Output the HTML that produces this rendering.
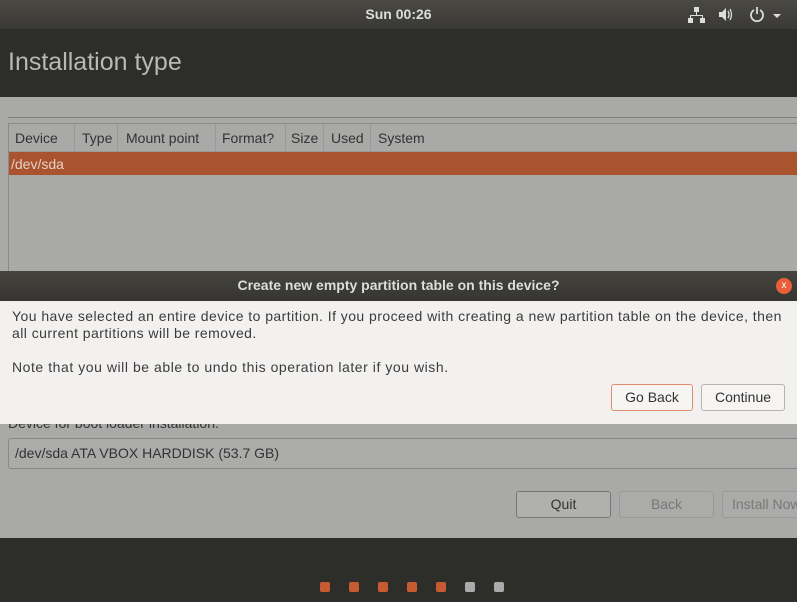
<!DOCTYPE html>
<html><head><style>
body{margin:0;width:797px;height:602px;overflow:hidden;background:#a9a9a8;font-family:"Liberation Sans",sans-serif;position:relative}
div{position:absolute;box-sizing:border-box}
.t{white-space:nowrap}
</style></head><body>
<div style="left:0;top:0;width:797px;height:29px;background:linear-gradient(#4a4944,#3a3935)"></div>
<div class="t" style="left:0;width:797px;top:6px;text-align:center;color:#ddd;font-size:14px;font-weight:bold">Sun 00:26</div>
<svg style="position:absolute;left:688px;top:6px" width="100" height="18">
<g fill="#ddd"><rect x="6" y="1" width="5" height="5"/><rect x="8" y="6" width="1" height="4"/><rect x="2" y="9" width="13" height="1"/><rect x="2" y="9" width="1" height="3"/><rect x="14" y="9" width="1" height="3"/><rect x="0" y="12" width="5" height="5"/><rect x="12" y="12" width="5" height="5"/>
<path d="M31 6h3l4-4v13l-4-4h-3z"/></g>
<path d="M40 5q2 3.5 0 7M42 3q3 5.5 0 11" stroke="#ddd" fill="none" stroke-width="1.3"/>
<path d="M66 4a6 6 0 1 0 6 0M69 1v7" stroke="#ddd" fill="none" stroke-width="1.8"/>
<path d="M85 8h8l-4 4z" fill="#ddd"/>
</svg>
<div style="left:0;top:29px;width:797px;height:68px;background:#2d2d29"></div>
<div class="t" style="left:8px;top:48px;color:#b8b8b5;font-size:25px">Installation type</div>
<div style="left:8px;top:117px;width:789px;height:1px;background:#7e7e7c"></div>
<div style="left:8px;top:123px;width:789px;height:160px;border:1px solid #8a8a88;border-right:none;background:#a9a9a8"></div>
<div style="left:9px;top:124px;width:788px;height:28px;border-bottom:1px solid #999"></div>
<div class="t" style="left:15px;top:130px;font-size:14px;color:#333">Device</div>
<div class="t" style="left:82px;top:130px;font-size:14px;color:#333">Type</div>
<div class="t" style="left:126px;top:130px;font-size:14px;color:#333">Mount point</div>
<div class="t" style="left:222px;top:130px;font-size:14px;color:#333">Format?</div>
<div class="t" style="left:291px;top:130px;font-size:14px;color:#333">Size</div>
<div class="t" style="left:331px;top:130px;font-size:14px;color:#333">Used</div>
<div class="t" style="left:378px;top:130px;font-size:14px;color:#333">System</div>
<div style="left:74px;top:124px;width:1px;height:28px;background:#999"></div>
<div style="left:117px;top:124px;width:1px;height:28px;background:#999"></div>
<div style="left:215px;top:124px;width:1px;height:28px;background:#999"></div>
<div style="left:285px;top:124px;width:1px;height:28px;background:#999"></div>
<div style="left:323px;top:124px;width:1px;height:28px;background:#999"></div>
<div style="left:370px;top:124px;width:1px;height:28px;background:#999"></div>
<div style="left:9px;top:152px;width:788px;height:23px;background:#a9532f"></div>
<div class="t" style="left:11px;top:156px;font-size:14px;color:#e8d0c4">/dev/sda</div>
<div style="left:0;top:271px;width:797px;height:30px;background:linear-gradient(#45443f,#363531)"></div>
<div class="t" style="left:0;width:797px;top:277px;text-align:center;color:#ddd;font-size:14px;font-weight:bold">Create new empty partition table on this device?</div>
<div style="left:776px;top:278px;width:16px;height:16px;border-radius:50%;background:#e95f3a;color:#fff;font-size:10px;text-align:center;line-height:16px">x</div>
<div style="left:0;top:301px;width:797px;height:123px;background:#f2f1f0"></div>
<div class="t" style="left:12px;top:308px;font-size:14px;letter-spacing:0.45px;line-height:17px;color:#3c3c3c">You have selected an entire device to partition. If you proceed with creating a new partition table on the device, then<br>all current partitions will be removed.</div>
<div class="t" style="left:12px;top:359px;font-size:14px;letter-spacing:0.55px;color:#3c3c3c">Note that you will be able to undo this operation later if you wish.</div>
<div style="left:611px;top:384px;width:82px;height:27px;border:1px solid #e08c6c;border-radius:3px;background:#f6f5f4;font-size:14px;color:#333;text-align:center;line-height:25px">Go Back</div>
<div style="left:701px;top:384px;width:84px;height:27px;border:1px solid #b4b4b0;border-radius:3px;background:#f6f5f4;font-size:14px;color:#333;text-align:center;line-height:25px">Continue</div>
<div style="left:8px;top:424px;width:300px;height:7px;overflow:hidden"><div class="t" style="left:0;top:-9px;font-size:14px;color:#333">Device for boot loader installation:</div></div>
<div style="left:8px;top:438px;width:800px;height:31px;border:1px solid #888;border-radius:3px;background:#ababaa"></div>
<div class="t" style="left:15px;top:445px;font-size:14px;color:#333">/dev/sda ATA VBOX HARDDISK (53.7 GB)</div>
<div style="left:516px;top:491px;width:95px;height:27px;border:1px solid #777;border-radius:3px;background:#b0b0ae;font-size:14px;color:#333;text-align:center;line-height:25px">Quit</div>
<div style="left:619px;top:491px;width:95px;height:27px;border:1px solid #999;border-radius:3px;background:#ababaa;font-size:14px;color:#777;text-align:center;line-height:25px">Back</div>
<div style="left:722px;top:491px;width:95px;height:27px;border:1px solid #999;border-radius:3px;background:#ababaa;font-size:14px;color:#777;line-height:25px;padding-left:9px" class="t">Install Now</div>
<div style="left:0;top:538px;width:797px;height:64px;background:#2d2d29"></div>
<div style="left:320px;top:582px;width:10px;height:10px;border-radius:2px;background:#c65b32"></div>
<div style="left:349px;top:582px;width:10px;height:10px;border-radius:2px;background:#c65b32"></div>
<div style="left:378px;top:582px;width:10px;height:10px;border-radius:2px;background:#c65b32"></div>
<div style="left:407px;top:582px;width:10px;height:10px;border-radius:2px;background:#c65b32"></div>
<div style="left:436px;top:582px;width:10px;height:10px;border-radius:2px;background:#c65b32"></div>
<div style="left:465px;top:582px;width:10px;height:10px;border-radius:2px;background:#aaa"></div>
<div style="left:494px;top:582px;width:10px;height:10px;border-radius:2px;background:#aaa"></div>
</body></html>
